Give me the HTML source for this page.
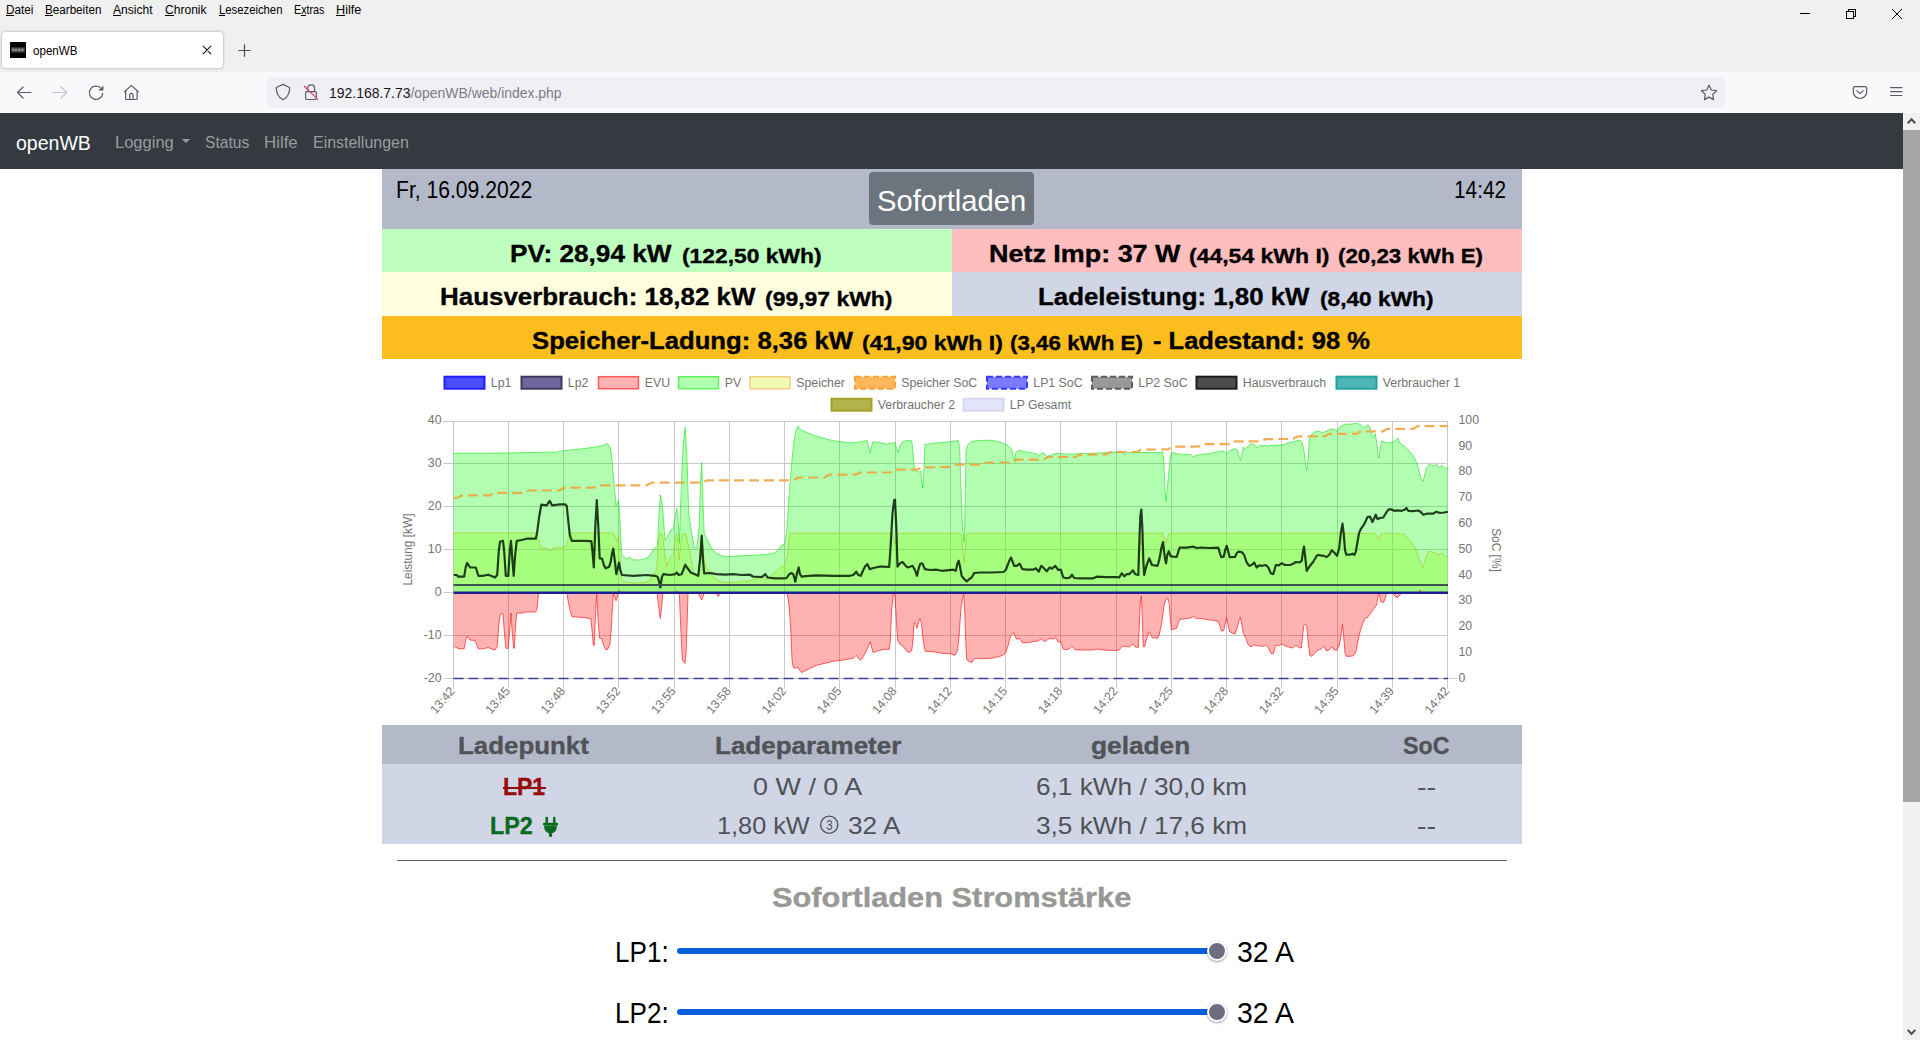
<!DOCTYPE html>
<html lang="de">
<head>
<meta charset="utf-8">
<title>openWB</title>
<style>
*{box-sizing:border-box;margin:0;padding:0}
html,body{width:1920px;height:1040px;overflow:hidden;background:#fff;font-family:"Liberation Sans",sans-serif;color:#000}
.abs{position:absolute}
.t{position:absolute;white-space:nowrap;line-height:1;transform-origin:0 0}
/* ---------- browser chrome ---------- */
#titlebar{position:absolute;left:0;top:0;width:1920px;height:72px;background:#f0f0f0}
#menubar span{position:absolute;top:3px;font-size:12px;line-height:15px;color:#000;white-space:nowrap;transform-origin:0 0}
#menubar u{text-decoration:underline;text-underline-offset:1px}
#tab{position:absolute;left:2px;top:32px;width:221px;height:36px;background:#fff;border-radius:4px;box-shadow:0 0 3px rgba(0,0,0,.35)}
#favicon{position:absolute;left:10px;top:42px;width:16px;height:16px;background:#000;overflow:hidden}
#toolbar{position:absolute;left:0;top:72px;width:1920px;height:41px;background:#f9f9fb}
#urlbar{position:absolute;left:267px;top:77px;width:1458px;height:31px;background:#f0f0f4;border-radius:4px}
svg.ic{position:absolute;overflow:visible}
/* ---------- page ---------- */
#page{position:absolute;left:0;top:113px;width:1903px;height:927px;background:#fff;overflow:hidden}
#navbar{position:absolute;left:0;top:0;width:1903px;height:56px;background:#343a40}
#scroll{position:absolute;left:1903px;top:113px;width:17px;height:927px;background:#f0f0f0}
#thumb{position:absolute;left:0;top:17px;width:17px;height:672px;background:#a6a6a6}
.row{position:absolute}
.b{font-weight:bold}
</style>
</head>
<body>

<!-- ================= browser chrome ================= -->
<div id="titlebar"></div>
<div id="tab"></div>
<div id="favicon"><svg width="16" height="16" viewBox="0 0 16 16"><rect width="16" height="16" fill="#000"/><rect x="1" y="5" width="14" height="6" fill="#2a2a2a"/><rect x="1.500" y="5.800" width="13" height="4.200" fill="#4a4a4a"/><path d="M2 7.900h12" stroke="#9a9a9a" stroke-width="2.200" stroke-dasharray="2.200 0.800" opacity=".8"/></svg></div>
<div id="toolbar"></div>
<div id="urlbar"></div>

<!-- menu mnemonics underlines -->
<div class="abs" style="left:6px;top:15px;width:8px;height:1px;background:#000"></div><div class="abs" style="left:45px;top:15px;width:8px;height:1px;background:#000"></div><div class="abs" style="left:113px;top:15px;width:8px;height:1px;background:#000"></div><div class="abs" style="left:165px;top:15px;width:9px;height:1px;background:#000"></div><div class="abs" style="left:219px;top:15px;width:6px;height:1px;background:#000"></div><div class="abs" style="left:301px;top:15px;width:5px;height:1px;background:#000"></div><div class="abs" style="left:336px;top:15px;width:9px;height:1px;background:#000"></div>

<!-- window controls -->
<svg class="ic" style="left:1790px;top:0" width="130" height="30" viewBox="1790 0 130 30" fill="none" stroke="#000" stroke-width="1">
  <path d="M1800 13.500h10" shape-rendering="crispEdges"/>
  <path d="M1846.500 11.500h7v7h-7z" shape-rendering="crispEdges"/>
  <path d="M1848.500 11.500v-2h7v7h-2" shape-rendering="crispEdges"/>
  <path d="M1892 9l10 10M1902 9l-10 10"/>
</svg>

<!-- tab close / new tab -->
<svg class="ic" style="left:195px;top:40px" width="70" height="24" viewBox="195 40 70 24" fill="none" stroke="#15141a" stroke-width="1.100" stroke-linecap="round">
  <path d="M203.200 46.200l7.600 7.600M210.800 46.200l-7.600 7.600"/>
  <path d="M238.800 50.500h11.500M244.500 44.800v11.500" stroke="#4a4a52" stroke-width="1.200"/>
</svg>

<!-- toolbar icons -->
<svg class="ic" style="left:10px;top:80px" width="140" height="26" viewBox="10 80 140 26" fill="none" stroke="#5b5b66" stroke-width="1.2" stroke-linecap="round" stroke-linejoin="round">
  <!-- back -->
  <path d="M31 92.500H17.500M23.100 87l-5.600 5.500 5.600 5.500"/>
  <!-- forward (disabled) -->
  <g stroke="#c3c3c9"><path d="M53 92.500h13.700M61.100 87l5.600 5.500-5.600 5.500"/></g>
  <!-- reload: open circle + solid arrow head -->
  <path d="M100.300 87.600A6.700 6.700 0 1 0 102.700 93.400"/>
  <path d="M103.400 85.500v5.100h-5.100z" fill="#5b5b66" stroke="none"/>
  <!-- home -->
  <path d="M124.600 91.800l6.800-6.400 6.800 6.400"/>
  <path d="M125.700 91.200v7.600a.7.700 0 0 0 .7.700h10a.7.700 0 0 0 .7-.7v-7.600"/>
  <path d="M129.700 99.300v-4.300a1.700 1.700 0 0 1 3.400 0v4.300"/>
</svg>

<!-- shield + insecure lock -->
<svg class="ic" style="left:270px;top:80px" width="56" height="26" viewBox="270 80 56 26" fill="none" stroke="#5b5b66" stroke-width="1.2" stroke-linecap="round" stroke-linejoin="round">
  <path d="M283 84.400l6.700 3.100c0 5.800-1.700 9.800-6.700 12.200-5-2.400-6.700-6.400-6.700-12.200z"/>
  <!-- lock -->
  <rect x="305.600" y="91.700" width="10.800" height="7.800" rx="1.300"/>
  <path d="M307.800 91.500v-3.300a3.400 3.400 0 0 1 6.800 0v3.300"/>
  <path d="M304.300 86.300l13.400 13.100" stroke="#e5456f" stroke-width="1.300"/>
</svg>

<!-- star / pocket / menu -->
<svg class="ic" style="left:1695px;top:80px" width="215" height="26" viewBox="1695 80 215 26" fill="none" stroke="#5b5b66" stroke-width="1.2" stroke-linecap="round" stroke-linejoin="round">
  <path d="M1709 85.200l2.300 4.800 5.200.700-3.800 3.700.9 5.200-4.600-2.500-4.600 2.500.9-5.200-3.800-3.700 5.200-.7z"/>
  <!-- pocket -->
  <path d="M1854.800 86.600h10.400a1.500 1.500 0 0 1 1.500 1.500v3.700a6.700 6.700 0 0 1-13.400 0v-3.700a1.500 1.500 0 0 1 1.500-1.500z"/>
  <path d="M1856.900 90.600l3.100 3 3.100-3"/>
  <!-- hamburger -->
  <path d="M1890.500 87.600h11.500M1890.500 91.600h11.500M1890.500 95.500h11.500" stroke-width="1.1"/>
</svg>

<!-- ================= scrollbar ================= -->
<div id="scroll"><div id="thumb"></div>
<svg class="ic" style="left:0;top:0" width="17" height="927" viewBox="0 0 17 927" fill="none" stroke="#505050" stroke-width="2.100">
  <path d="M4.700 10.300l3.800-4 3.800 4"/>
  <path d="M4.700 916.900l3.800 4 3.800-4"/>
</svg>
</div>

<!-- ================= page ================= -->
<div id="page"><div id="navbar"></div></div>
<!-- dropdown caret next to Logging -->
<div class="abs" style="left:181.500px;top:138.800px;width:0;height:0;border-left:4.500px solid transparent;border-right:4.500px solid transparent;border-top:4.500px solid #999c9f"></div>

<!-- header row (date / mode button / time) -->
<div class="abs" style="left:382px;top:169px;width:1140px;height:60px;background:#b4b9c9"></div>
<div class="abs" style="left:869px;top:172px;width:165px;height:53px;background:#6c757d;border-radius:4px"></div>

<!-- info rows -->
<div class="abs" style="left:382px;top:229px;width:570px;height:43px;background:#befebe"></div>
<div class="abs" style="left:952px;top:229px;width:570px;height:43px;background:#febebe"></div>
<div class="abs" style="left:382px;top:272px;width:570px;height:44px;background:#fefedf"></div>
<div class="abs" style="left:952px;top:272px;width:570px;height:44px;background:#d0d6e6"></div>
<div class="abs" style="left:382px;top:316px;width:1140px;height:43px;background:#fcbe1e"></div>

<!-- charge point table -->
<div class="abs" style="left:382px;top:725px;width:1140px;height:39px;background:#b4b9c9"></div>
<div class="abs" style="left:382px;top:764px;width:1140px;height:80px;background:#d0d6e6"></div>
<!-- LP1 strike-through -->
<div class="abs" style="left:502.500px;top:786.600px;width:43px;height:2px;background:#9b0a0a"></div>
<!-- plug icon -->
<svg class="ic" style="left:543px;top:816.500px" width="15" height="20.500" viewBox="0 0 15 20" fill="#0b6a1d">
  <rect x="2.500" y="-0.600" width="2.500" height="7" rx="1.100"/>
  <rect x="10" y="-0.600" width="2.500" height="7" rx="1.100"/>
  <rect x="0" y="5.600" width="15" height="2.600" rx="1"/>
  <path d="M1.200 8.200h12.600v1.600a6.300 6.300 0 0 1-4.700 6.100v3.600h-3.200v-3.600a6.300 6.300 0 0 1-4.700-6.100z"/>
</svg>
<!-- phase count circle (3) -->
<svg class="ic" style="left:819px;top:815px" width="21" height="21" viewBox="0 0 21 21">
  <circle cx="10.250" cy="9.750" r="8.600" fill="none" stroke="#4f5256" stroke-width="1.400"/>
  <text transform="translate(10.500,15.200) scale(0.760,1)" x="0" y="0" text-anchor="middle" font-family="Liberation Sans, sans-serif" font-size="15" fill="#4f5256">3</text>
</svg>

<!-- separator -->
<div class="abs" style="left:397px;top:859.500px;width:1110px;height:1px;background:#5f5f5f"></div>

<!-- sliders -->
<div class="abs" style="left:677px;top:948px;width:540px;height:6px;background:#0860dc;border-radius:3px"></div>
<div class="abs" style="left:1207px;top:941px;width:20px;height:20px;border-radius:50%;background:#6d6d80;border:2px solid #fff;box-shadow:0 1px 2.500px rgba(0,0,0,.4)"></div>
<div class="abs" style="left:677px;top:1009px;width:540px;height:6px;background:#0860dc;border-radius:3px"></div>
<div class="abs" style="left:1207px;top:1002px;width:20px;height:20px;border-radius:50%;background:#6d6d80;border:2px solid #fff;box-shadow:0 1px 2.500px rgba(0,0,0,.4)"></div>

<!-- ================= chart ================= -->
<svg class="ic" style="left:382px;top:359px" width="1140" height="366" viewBox="382 359 1140 366">
<rect x="444.5" y="376.7" width="40" height="12" fill="#4d4dff" stroke="#1f1fff" stroke-width="2"/>
<text x="490.8" y="386.5" font-family="Liberation Sans, sans-serif" font-size="12.3" fill="#747474">Lp1</text>
<rect x="521.5" y="376.7" width="40" height="12" fill="#6f669e" stroke="#3c3960" stroke-width="2"/>
<text x="567.8" y="386.5" font-family="Liberation Sans, sans-serif" font-size="12.3" fill="#747474">Lp2</text>
<rect x="598.5" y="376.7" width="40" height="12" fill="#ffb2b2" stroke="#ff5a5a" stroke-width="1.5"/>
<text x="644.8" y="386.5" font-family="Liberation Sans, sans-serif" font-size="12.3" fill="#747474">EVU</text>
<rect x="678.5" y="376.7" width="40" height="12" fill="#b2ffb2" stroke="#5cf25c" stroke-width="1.5"/>
<text x="724.8" y="386.5" font-family="Liberation Sans, sans-serif" font-size="12.3" fill="#747474">PV</text>
<rect x="750.0" y="376.7" width="40" height="12" fill="#f1fbb4" stroke="#f6cc7e" stroke-width="1.5"/>
<text x="796.3" y="386.5" font-family="Liberation Sans, sans-serif" font-size="12.3" fill="#747474">Speicher</text>
<rect x="855.0" y="376.7" width="40" height="12" fill="#ffb75c" stroke="#f9a43a" stroke-width="2" stroke-dasharray="6 3"/>
<text x="901.3" y="386.5" font-family="Liberation Sans, sans-serif" font-size="12.3" fill="#747474">Speicher SoC</text>
<rect x="987.0" y="376.7" width="40" height="12" fill="#7a7aff" stroke="#3b3bff" stroke-width="2" stroke-dasharray="6 3"/>
<text x="1033.3" y="386.5" font-family="Liberation Sans, sans-serif" font-size="12.3" fill="#747474">LP1 SoC</text>
<rect x="1092.0" y="376.7" width="40" height="12" fill="#989898" stroke="#5c5c5c" stroke-width="2" stroke-dasharray="6 3"/>
<text x="1138.3" y="386.5" font-family="Liberation Sans, sans-serif" font-size="12.3" fill="#747474">LP2 SoC</text>
<rect x="1196.5" y="376.7" width="40" height="12" fill="#4d4d4d" stroke="#1c1c1c" stroke-width="2"/>
<text x="1242.8" y="386.5" font-family="Liberation Sans, sans-serif" font-size="12.3" fill="#747474">Hausverbrauch</text>
<rect x="1336.5" y="376.7" width="40" height="12" fill="#4db5b3" stroke="#22a3a0" stroke-width="2"/>
<text x="1382.8" y="386.5" font-family="Liberation Sans, sans-serif" font-size="12.3" fill="#747474">Verbraucher 1</text>
<rect x="831.5" y="398.7" width="40" height="12" fill="#b3b34a" stroke="#a3a328" stroke-width="2"/>
<text x="877.8" y="408.5" font-family="Liberation Sans, sans-serif" font-size="12.3" fill="#747474">Verbraucher 2</text>
<rect x="963.5" y="398.7" width="40" height="12" fill="#e3e3fa" stroke="#d6d6ee" stroke-width="2"/>
<text x="1009.8" y="408.5" font-family="Liberation Sans, sans-serif" font-size="12.3" fill="#747474">LP Gesamt</text>
<path d="M453.5,421.0V688.5M508.5,421.0V688.5M563.5,421.0V688.5M618.5,421.0V688.5M674.5,421.0V688.5M729.5,421.0V688.5M784.5,421.0V688.5M839.5,421.0V688.5M895.5,421.0V688.5M950.5,421.0V688.5M1005.5,421.0V688.5M1060.5,421.0V688.5M1116.5,421.0V688.5M1171.5,421.0V688.5M1226.5,421.0V688.5M1281.5,421.0V688.5M1337.5,421.0V688.5M1392.5,421.0V688.5M1447.5,421.0V688.5M443.5,421.5H1447.5M443.5,463.5H1447.5M443.5,506.5H1447.5M443.5,549.5H1447.5M443.5,592.5H1447.5M443.5,635.5H1447.5M443.5,678.5H1447.5M1448.0,678.5H1457.0" fill="none" stroke="#c9c9c9" stroke-width="1"/>
<rect x="453.5" y="585.0" width="994.5" height="7.5" fill="rgba(0,0,255,0.08)"/>
<path d="M453.7,592.5 L453.7,533.0 L536.7,533.0 L538.3,538.3 L540.8,547.5 L546.7,548.3 L550.0,551.7 L552.5,548.3 L565.0,547.0 L567.5,541.7 L569.2,533.0 L613.3,533.0 L615.0,536.7 L616.7,541.7 L618.7,535.8 L620.0,560.0 L620.8,576.7 L623.3,581.7 L633.3,583.0 L645.0,582.5 L650.0,580.0 L653.3,574.2 L656.7,570.0 L658.3,543.3 L660.0,533.3 L662.5,534.2 L664.2,548.3 L666.7,566.7 L670.8,556.7 L673.3,555.0 L675.0,541.7 L676.7,533.7 L678.0,543.3 L679.2,560.0 L680.8,543.3 L682.5,533.7 L685.8,533.7 L687.5,541.7 L690.8,556.7 L693.3,573.3 L698.3,574.2 L699.5,560.0 L700.7,543.3 L701.7,534.2 L702.5,543.3 L704.2,560.0 L706.7,568.3 L711.7,575.0 L716.7,580.0 L721.7,582.0 L733.3,582.5 L750.0,580.8 L758.3,578.3 L763.3,577.5 L765.3,580.0 L766.7,578.3 L771.7,575.0 L776.7,570.8 L780.0,567.5 L783.3,566.3 L785.8,563.3 L787.5,555.0 L788.7,540.0 L790.0,533.3 L891.7,533.3 L893.3,536.7 L895.3,544.2 L897.0,536.7 L898.3,533.3 L960.8,533.3 L961.7,536.7 L963.0,551.7 L964.3,563.3 L965.3,551.7 L966.3,534.2 L967.5,533.3 L1008.3,533.3 L1010.0,533.3 L1139.2,533.3 L1141.3,545.0 L1143.0,534.2 L1144.3,533.3 L1162.5,533.3 L1164.2,537.5 L1165.8,543.3 L1167.5,537.5 L1169.2,533.3 L1308.3,533.3 L1310.0,533.3 L1375.0,533.3 L1376.7,535.8 L1378.7,539.2 L1380.3,534.7 L1382.5,533.3 L1398.3,533.3 L1400.8,534.2 L1403.3,533.7 L1405.8,537.5 L1408.3,538.3 L1410.8,541.7 L1413.3,545.0 L1415.8,549.2 L1418.3,556.7 L1420.8,563.3 L1423.0,567.5 L1424.7,561.7 L1426.7,555.0 L1429.2,551.3 L1431.7,551.7 L1436.7,553.7 L1439.2,555.0 L1441.7,552.5 L1444.7,555.8 L1447.8,557.0 L1447.8,592.5 Z" fill="rgba(200,255,13,0.3)" stroke="none"/>
<polyline points="453.7,533.0 536.7,533.0 538.3,538.3 540.8,547.5 546.7,548.3 550.0,551.7 552.5,548.3 565.0,547.0 567.5,541.7 569.2,533.0 613.3,533.0 615.0,536.7 616.7,541.7 618.7,535.8 620.0,560.0 620.8,576.7 623.3,581.7 633.3,583.0 645.0,582.5 650.0,580.0 653.3,574.2 656.7,570.0 658.3,543.3 660.0,533.3 662.5,534.2 664.2,548.3 666.7,566.7 670.8,556.7 673.3,555.0 675.0,541.7 676.7,533.7 678.0,543.3 679.2,560.0 680.8,543.3 682.5,533.7 685.8,533.7 687.5,541.7 690.8,556.7 693.3,573.3 698.3,574.2 699.5,560.0 700.7,543.3 701.7,534.2 702.5,543.3 704.2,560.0 706.7,568.3 711.7,575.0 716.7,580.0 721.7,582.0 733.3,582.5 750.0,580.8 758.3,578.3 763.3,577.5 765.3,580.0 766.7,578.3 771.7,575.0 776.7,570.8 780.0,567.5 783.3,566.3 785.8,563.3 787.5,555.0 788.7,540.0 790.0,533.3 891.7,533.3 893.3,536.7 895.3,544.2 897.0,536.7 898.3,533.3 960.8,533.3 961.7,536.7 963.0,551.7 964.3,563.3 965.3,551.7 966.3,534.2 967.5,533.3 1008.3,533.3 1010.0,533.3 1139.2,533.3 1141.3,545.0 1143.0,534.2 1144.3,533.3 1162.5,533.3 1164.2,537.5 1165.8,543.3 1167.5,537.5 1169.2,533.3 1308.3,533.3 1310.0,533.3 1375.0,533.3 1376.7,535.8 1378.7,539.2 1380.3,534.7 1382.5,533.3 1398.3,533.3 1400.8,534.2 1403.3,533.7 1405.8,537.5 1408.3,538.3 1410.8,541.7 1413.3,545.0 1415.8,549.2 1418.3,556.7 1420.8,563.3 1423.0,567.5 1424.7,561.7 1426.7,555.0 1429.2,551.3 1431.7,551.7 1436.7,553.7 1439.2,555.0 1441.7,552.5 1444.7,555.8 1447.8,557.0" fill="none" stroke="rgba(255,155,13,0.55)" stroke-width="1" stroke-linejoin="round"/>
<path d="M453.7,592.5 L453.7,453.3 L508.7,453.0 L556.7,452.0 L563.3,450.7 L583.3,448.7 L600.0,446.3 L607.7,443.7 L610.3,447.5 L612.0,460.0 L613.7,480.0 L616.0,505.8 L618.7,500.0 L620.3,526.7 L621.7,555.0 L625.0,557.5 L627.7,559.2 L629.7,557.0 L632.5,559.7 L640.0,560.0 L646.7,558.0 L650.0,555.0 L653.3,549.2 L657.5,545.8 L659.2,510.0 L660.5,495.0 L662.5,506.7 L665.0,540.0 L666.7,538.3 L670.8,530.0 L673.3,528.7 L675.3,516.7 L676.7,508.3 L678.0,518.3 L679.3,543.3 L681.7,476.7 L683.3,443.3 L685.2,427.2 L687.0,460.0 L688.7,513.3 L691.7,533.3 L694.2,547.5 L696.7,547.5 L699.2,526.7 L700.3,490.0 L700.7,476.7 L701.7,462.5 L703.0,503.3 L704.2,533.3 L706.7,538.3 L710.0,545.0 L712.5,549.7 L716.7,553.3 L721.7,555.8 L726.7,556.7 L741.7,555.8 L758.3,555.0 L770.0,554.2 L775.0,552.5 L778.3,550.0 L780.8,545.8 L783.3,545.0 L785.3,541.7 L787.0,526.7 L789.2,493.3 L791.7,463.3 L793.7,443.3 L795.8,430.8 L798.3,426.2 L800.8,429.7 L806.7,432.5 L816.7,436.3 L830.0,440.0 L839.7,441.7 L850.0,442.8 L860.0,442.0 L867.2,440.5 L868.7,445.8 L870.3,453.0 L871.7,445.8 L873.0,441.7 L880.0,442.8 L886.7,444.2 L895.0,442.5 L896.3,447.5 L898.0,452.5 L899.7,445.8 L902.5,441.7 L906.7,440.5 L911.7,440.8 L913.0,451.7 L914.2,466.7 L916.7,471.3 L919.2,472.0 L920.8,471.3 L921.7,480.0 L922.8,488.0 L923.8,473.3 L925.0,444.2 L927.5,444.2 L933.3,443.3 L941.7,442.5 L950.0,441.7 L958.3,440.5 L959.7,448.3 L960.8,485.0 L962.5,526.7 L964.2,542.5 L965.0,510.0 L966.0,451.7 L967.5,445.0 L970.0,442.5 L975.0,440.8 L983.3,440.3 L991.7,440.3 L1000.0,442.0 L1006.7,444.7 L1010.0,447.5 L1012.0,450.0 L1013.3,456.7 L1014.7,460.0 L1015.8,453.0 L1017.5,450.8 L1020.0,450.5 L1025.0,451.7 L1033.3,453.0 L1036.7,453.7 L1038.7,456.3 L1040.8,453.7 L1043.0,452.5 L1045.0,454.2 L1047.0,456.7 L1050.0,455.3 L1056.7,453.3 L1066.7,454.2 L1083.3,453.7 L1100.0,453.0 L1116.7,452.0 L1122.5,452.5 L1125.0,455.0 L1127.5,452.5 L1141.7,452.5 L1158.3,452.5 L1162.5,452.0 L1163.7,460.0 L1165.0,490.0 L1166.0,501.3 L1167.2,490.0 L1168.7,473.3 L1170.0,460.0 L1171.3,452.5 L1176.7,453.7 L1183.3,454.7 L1190.0,454.2 L1193.3,457.0 L1196.7,455.0 L1208.3,453.7 L1216.7,452.0 L1223.3,450.8 L1226.3,453.7 L1230.8,450.0 L1235.0,448.7 L1237.5,450.0 L1239.2,457.5 L1240.3,460.3 L1241.7,455.0 L1243.3,447.0 L1245.3,449.2 L1248.3,445.8 L1251.7,443.8 L1254.2,444.2 L1257.0,448.0 L1260.0,445.3 L1266.7,445.8 L1275.0,445.3 L1283.3,444.7 L1291.7,442.0 L1300.0,440.0 L1302.0,441.7 L1304.2,451.7 L1305.8,466.7 L1307.0,470.0 L1308.0,460.0 L1309.2,440.0 L1311.7,434.2 L1315.0,432.0 L1318.3,430.8 L1322.5,433.0 L1326.7,430.8 L1331.7,428.8 L1335.0,429.7 L1337.0,431.3 L1340.0,426.7 L1345.0,424.2 L1350.0,424.2 L1356.7,423.3 L1360.8,424.7 L1364.2,428.0 L1366.7,425.3 L1368.3,425.0 L1370.0,427.5 L1372.5,436.7 L1373.7,437.5 L1375.3,433.7 L1376.7,443.3 L1378.0,455.0 L1378.8,458.3 L1380.0,450.0 L1381.7,440.8 L1385.0,442.5 L1388.3,443.0 L1393.3,441.7 L1396.7,439.2 L1398.0,438.3 L1400.0,443.3 L1403.3,445.3 L1408.3,450.0 L1413.3,455.8 L1416.7,462.5 L1419.2,471.7 L1421.3,479.2 L1423.0,481.7 L1424.7,475.0 L1426.7,467.5 L1429.2,464.2 L1431.7,465.3 L1434.2,465.8 L1436.7,464.2 L1439.2,468.0 L1441.7,465.3 L1444.7,468.0 L1447.8,468.3 L1447.8,592.5 Z" fill="rgba(0,255,0,0.3)" stroke="none"/>
<polyline points="453.7,453.3 508.7,453.0 556.7,452.0 563.3,450.7 583.3,448.7 600.0,446.3 607.7,443.7 610.3,447.5 612.0,460.0 613.7,480.0 616.0,505.8 618.7,500.0 620.3,526.7 621.7,555.0 625.0,557.5 627.7,559.2 629.7,557.0 632.5,559.7 640.0,560.0 646.7,558.0 650.0,555.0 653.3,549.2 657.5,545.8 659.2,510.0 660.5,495.0 662.5,506.7 665.0,540.0 666.7,538.3 670.8,530.0 673.3,528.7 675.3,516.7 676.7,508.3 678.0,518.3 679.3,543.3 681.7,476.7 683.3,443.3 685.2,427.2 687.0,460.0 688.7,513.3 691.7,533.3 694.2,547.5 696.7,547.5 699.2,526.7 700.3,490.0 700.7,476.7 701.7,462.5 703.0,503.3 704.2,533.3 706.7,538.3 710.0,545.0 712.5,549.7 716.7,553.3 721.7,555.8 726.7,556.7 741.7,555.8 758.3,555.0 770.0,554.2 775.0,552.5 778.3,550.0 780.8,545.8 783.3,545.0 785.3,541.7 787.0,526.7 789.2,493.3 791.7,463.3 793.7,443.3 795.8,430.8 798.3,426.2 800.8,429.7 806.7,432.5 816.7,436.3 830.0,440.0 839.7,441.7 850.0,442.8 860.0,442.0 867.2,440.5 868.7,445.8 870.3,453.0 871.7,445.8 873.0,441.7 880.0,442.8 886.7,444.2 895.0,442.5 896.3,447.5 898.0,452.5 899.7,445.8 902.5,441.7 906.7,440.5 911.7,440.8 913.0,451.7 914.2,466.7 916.7,471.3 919.2,472.0 920.8,471.3 921.7,480.0 922.8,488.0 923.8,473.3 925.0,444.2 927.5,444.2 933.3,443.3 941.7,442.5 950.0,441.7 958.3,440.5 959.7,448.3 960.8,485.0 962.5,526.7 964.2,542.5 965.0,510.0 966.0,451.7 967.5,445.0 970.0,442.5 975.0,440.8 983.3,440.3 991.7,440.3 1000.0,442.0 1006.7,444.7 1010.0,447.5 1012.0,450.0 1013.3,456.7 1014.7,460.0 1015.8,453.0 1017.5,450.8 1020.0,450.5 1025.0,451.7 1033.3,453.0 1036.7,453.7 1038.7,456.3 1040.8,453.7 1043.0,452.5 1045.0,454.2 1047.0,456.7 1050.0,455.3 1056.7,453.3 1066.7,454.2 1083.3,453.7 1100.0,453.0 1116.7,452.0 1122.5,452.5 1125.0,455.0 1127.5,452.5 1141.7,452.5 1158.3,452.5 1162.5,452.0 1163.7,460.0 1165.0,490.0 1166.0,501.3 1167.2,490.0 1168.7,473.3 1170.0,460.0 1171.3,452.5 1176.7,453.7 1183.3,454.7 1190.0,454.2 1193.3,457.0 1196.7,455.0 1208.3,453.7 1216.7,452.0 1223.3,450.8 1226.3,453.7 1230.8,450.0 1235.0,448.7 1237.5,450.0 1239.2,457.5 1240.3,460.3 1241.7,455.0 1243.3,447.0 1245.3,449.2 1248.3,445.8 1251.7,443.8 1254.2,444.2 1257.0,448.0 1260.0,445.3 1266.7,445.8 1275.0,445.3 1283.3,444.7 1291.7,442.0 1300.0,440.0 1302.0,441.7 1304.2,451.7 1305.8,466.7 1307.0,470.0 1308.0,460.0 1309.2,440.0 1311.7,434.2 1315.0,432.0 1318.3,430.8 1322.5,433.0 1326.7,430.8 1331.7,428.8 1335.0,429.7 1337.0,431.3 1340.0,426.7 1345.0,424.2 1350.0,424.2 1356.7,423.3 1360.8,424.7 1364.2,428.0 1366.7,425.3 1368.3,425.0 1370.0,427.5 1372.5,436.7 1373.7,437.5 1375.3,433.7 1376.7,443.3 1378.0,455.0 1378.8,458.3 1380.0,450.0 1381.7,440.8 1385.0,442.5 1388.3,443.0 1393.3,441.7 1396.7,439.2 1398.0,438.3 1400.0,443.3 1403.3,445.3 1408.3,450.0 1413.3,455.8 1416.7,462.5 1419.2,471.7 1421.3,479.2 1423.0,481.7 1424.7,475.0 1426.7,467.5 1429.2,464.2 1431.7,465.3 1434.2,465.8 1436.7,464.2 1439.2,468.0 1441.7,465.3 1444.7,468.0 1447.8,468.3" fill="none" stroke="rgba(0,225,0,0.55)" stroke-width="1" stroke-linejoin="round"/>
<path d="M453.7,592.5 L453.7,647.0 L455.8,647.0 L458.3,648.7 L464.2,648.7 L465.8,640.0 L467.2,636.3 L470.0,640.0 L475.0,640.5 L476.7,645.0 L478.3,648.8 L483.3,648.8 L488.3,647.5 L493.3,649.7 L495.0,650.0 L497.2,646.7 L498.7,626.7 L500.0,615.0 L501.3,613.7 L503.0,614.2 L504.2,630.0 L505.8,648.3 L508.3,648.3 L509.7,630.0 L511.0,613.0 L512.0,630.0 L513.7,648.3 L514.3,648.3 L515.3,630.0 L516.7,613.3 L521.7,613.0 L526.7,612.0 L535.8,612.0 L537.0,608.3 L538.7,592.5 L566.7,592.5 L568.3,601.7 L570.0,610.0 L572.0,616.7 L583.3,617.5 L590.8,618.7 L592.0,630.0 L593.3,645.3 L594.3,645.3 L595.3,618.3 L596.7,594.2 L598.0,618.3 L599.3,638.0 L601.7,638.7 L603.7,645.8 L605.8,649.7 L607.5,649.7 L609.7,645.0 L611.0,633.3 L612.0,615.0 L613.3,594.2 L615.0,597.5 L616.0,600.8 L617.0,598.3 L618.3,592.5 L619.2,590.8 L620.0,592.5 L657.0,592.5 L658.7,606.7 L660.3,618.3 L661.7,606.7 L663.0,592.5 L675.8,592.5 L676.7,591.0 L677.7,592.5 L679.3,592.5 L680.7,626.7 L682.3,660.0 L685.0,663.3 L686.0,653.3 L687.0,626.7 L688.0,592.5 L698.3,592.5 L699.3,595.3 L700.7,598.3 L701.7,600.0 L703.3,595.8 L704.7,592.5 L715.8,592.5 L718.3,596.7 L720.3,592.5 L787.0,592.5 L789.2,606.7 L790.8,630.0 L792.0,660.0 L793.3,667.5 L795.8,668.3 L797.5,667.0 L800.0,670.8 L801.7,672.5 L808.3,669.2 L816.7,665.3 L825.0,663.3 L833.3,661.2 L843.3,660.0 L853.3,658.3 L856.3,655.3 L858.3,658.3 L860.8,660.3 L863.3,656.7 L866.7,650.0 L870.3,642.0 L873.0,652.5 L878.3,650.8 L885.0,649.2 L889.2,649.5 L890.3,640.0 L891.7,610.0 L893.3,594.2 L894.7,594.2 L895.8,610.0 L897.5,640.0 L900.0,644.2 L903.3,646.7 L906.7,651.3 L909.2,652.5 L911.7,650.8 L913.0,640.0 L914.2,622.5 L915.8,624.2 L917.0,628.3 L918.7,621.7 L920.0,618.7 L921.3,622.5 L922.5,635.0 L924.2,646.7 L925.3,651.3 L933.3,651.7 L941.7,653.3 L950.0,653.7 L955.0,655.3 L957.5,650.8 L959.2,635.0 L960.8,610.0 L962.5,598.3 L963.7,594.2 L964.7,610.0 L965.8,643.3 L966.7,659.2 L968.3,661.3 L972.0,662.5 L974.2,658.7 L983.3,658.7 L991.7,658.3 L1000.0,656.3 L1003.3,655.0 L1005.8,652.5 L1008.3,645.0 L1010.0,638.3 L1010.8,635.8 L1013.7,632.5 L1016.3,639.2 L1019.2,638.3 L1022.5,643.0 L1028.3,642.5 L1033.3,641.7 L1038.3,640.8 L1041.3,638.7 L1044.2,641.7 L1047.5,639.7 L1050.0,638.3 L1053.0,639.2 L1055.3,637.5 L1058.3,642.0 L1060.8,641.7 L1063.3,649.2 L1066.7,649.7 L1070.0,648.3 L1072.0,646.3 L1074.7,649.7 L1080.0,650.0 L1093.3,650.0 L1096.7,649.2 L1106.7,650.3 L1116.7,650.5 L1119.2,650.0 L1121.7,646.7 L1124.2,646.3 L1129.2,647.0 L1130.8,645.8 L1132.8,643.7 L1135.3,647.0 L1138.3,647.5 L1139.3,626.7 L1140.3,601.7 L1141.3,595.8 L1142.3,618.3 L1143.3,646.7 L1144.7,646.7 L1146.7,638.3 L1149.2,631.7 L1152.0,637.5 L1157.5,638.3 L1159.2,635.0 L1161.7,623.3 L1164.2,605.0 L1165.8,599.2 L1168.0,598.7 L1169.2,603.3 L1170.3,618.3 L1171.3,629.7 L1176.7,628.3 L1178.3,623.3 L1180.0,619.2 L1186.7,618.7 L1190.8,618.0 L1193.3,616.3 L1196.7,618.7 L1201.7,618.7 L1208.3,619.7 L1218.3,621.3 L1220.0,626.7 L1221.3,630.8 L1223.7,630.8 L1225.0,624.2 L1226.7,617.5 L1228.3,626.7 L1230.0,632.0 L1235.0,634.2 L1237.5,626.7 L1239.2,620.0 L1240.3,617.5 L1241.7,624.2 L1243.3,633.3 L1245.8,638.3 L1248.3,645.0 L1250.8,647.0 L1253.3,645.0 L1258.3,645.8 L1262.5,646.3 L1265.8,645.3 L1268.3,647.5 L1270.8,653.3 L1273.3,653.7 L1275.8,645.0 L1278.7,645.8 L1281.7,644.2 L1285.0,645.8 L1290.0,647.5 L1292.5,648.0 L1295.8,645.3 L1299.2,647.5 L1301.3,648.0 L1302.5,638.3 L1303.7,625.8 L1305.0,624.2 L1306.7,625.8 L1308.0,640.0 L1309.7,655.3 L1311.7,656.3 L1315.0,652.5 L1318.3,650.0 L1320.8,649.2 L1323.7,646.3 L1326.3,650.8 L1329.2,650.0 L1331.7,646.7 L1334.2,650.0 L1336.7,650.3 L1339.2,645.8 L1340.8,636.7 L1342.5,624.7 L1343.7,636.7 L1345.0,653.3 L1346.3,656.3 L1350.0,656.3 L1353.3,655.8 L1355.8,652.5 L1357.5,643.3 L1360.0,631.7 L1362.5,624.2 L1365.0,618.3 L1367.5,617.5 L1371.7,611.7 L1376.7,605.0 L1378.0,595.8 L1379.2,594.2 L1380.8,601.7 L1383.3,602.5 L1385.0,599.2 L1386.7,592.5 L1392.5,592.5 L1395.0,596.3 L1397.5,597.5 L1400.0,595.0 L1400.8,592.5 L1418.7,592.5 L1420.0,590.3 L1421.3,592.5 L1447.8,592.5 L1447.8,592.5 Z" fill="rgba(255,0,0,0.3)" stroke="none"/>
<polyline points="453.7,647.0 455.8,647.0 458.3,648.7 464.2,648.7 465.8,640.0 467.2,636.3 470.0,640.0 475.0,640.5 476.7,645.0 478.3,648.8 483.3,648.8 488.3,647.5 493.3,649.7 495.0,650.0 497.2,646.7 498.7,626.7 500.0,615.0 501.3,613.7 503.0,614.2 504.2,630.0 505.8,648.3 508.3,648.3 509.7,630.0 511.0,613.0 512.0,630.0 513.7,648.3 514.3,648.3 515.3,630.0 516.7,613.3 521.7,613.0 526.7,612.0 535.8,612.0 537.0,608.3 538.7,592.5 566.7,592.5 568.3,601.7 570.0,610.0 572.0,616.7 583.3,617.5 590.8,618.7 592.0,630.0 593.3,645.3 594.3,645.3 595.3,618.3 596.7,594.2 598.0,618.3 599.3,638.0 601.7,638.7 603.7,645.8 605.8,649.7 607.5,649.7 609.7,645.0 611.0,633.3 612.0,615.0 613.3,594.2 615.0,597.5 616.0,600.8 617.0,598.3 618.3,592.5 619.2,590.8 620.0,592.5 657.0,592.5 658.7,606.7 660.3,618.3 661.7,606.7 663.0,592.5 675.8,592.5 676.7,591.0 677.7,592.5 679.3,592.5 680.7,626.7 682.3,660.0 685.0,663.3 686.0,653.3 687.0,626.7 688.0,592.5 698.3,592.5 699.3,595.3 700.7,598.3 701.7,600.0 703.3,595.8 704.7,592.5 715.8,592.5 718.3,596.7 720.3,592.5 787.0,592.5 789.2,606.7 790.8,630.0 792.0,660.0 793.3,667.5 795.8,668.3 797.5,667.0 800.0,670.8 801.7,672.5 808.3,669.2 816.7,665.3 825.0,663.3 833.3,661.2 843.3,660.0 853.3,658.3 856.3,655.3 858.3,658.3 860.8,660.3 863.3,656.7 866.7,650.0 870.3,642.0 873.0,652.5 878.3,650.8 885.0,649.2 889.2,649.5 890.3,640.0 891.7,610.0 893.3,594.2 894.7,594.2 895.8,610.0 897.5,640.0 900.0,644.2 903.3,646.7 906.7,651.3 909.2,652.5 911.7,650.8 913.0,640.0 914.2,622.5 915.8,624.2 917.0,628.3 918.7,621.7 920.0,618.7 921.3,622.5 922.5,635.0 924.2,646.7 925.3,651.3 933.3,651.7 941.7,653.3 950.0,653.7 955.0,655.3 957.5,650.8 959.2,635.0 960.8,610.0 962.5,598.3 963.7,594.2 964.7,610.0 965.8,643.3 966.7,659.2 968.3,661.3 972.0,662.5 974.2,658.7 983.3,658.7 991.7,658.3 1000.0,656.3 1003.3,655.0 1005.8,652.5 1008.3,645.0 1010.0,638.3 1010.8,635.8 1013.7,632.5 1016.3,639.2 1019.2,638.3 1022.5,643.0 1028.3,642.5 1033.3,641.7 1038.3,640.8 1041.3,638.7 1044.2,641.7 1047.5,639.7 1050.0,638.3 1053.0,639.2 1055.3,637.5 1058.3,642.0 1060.8,641.7 1063.3,649.2 1066.7,649.7 1070.0,648.3 1072.0,646.3 1074.7,649.7 1080.0,650.0 1093.3,650.0 1096.7,649.2 1106.7,650.3 1116.7,650.5 1119.2,650.0 1121.7,646.7 1124.2,646.3 1129.2,647.0 1130.8,645.8 1132.8,643.7 1135.3,647.0 1138.3,647.5 1139.3,626.7 1140.3,601.7 1141.3,595.8 1142.3,618.3 1143.3,646.7 1144.7,646.7 1146.7,638.3 1149.2,631.7 1152.0,637.5 1157.5,638.3 1159.2,635.0 1161.7,623.3 1164.2,605.0 1165.8,599.2 1168.0,598.7 1169.2,603.3 1170.3,618.3 1171.3,629.7 1176.7,628.3 1178.3,623.3 1180.0,619.2 1186.7,618.7 1190.8,618.0 1193.3,616.3 1196.7,618.7 1201.7,618.7 1208.3,619.7 1218.3,621.3 1220.0,626.7 1221.3,630.8 1223.7,630.8 1225.0,624.2 1226.7,617.5 1228.3,626.7 1230.0,632.0 1235.0,634.2 1237.5,626.7 1239.2,620.0 1240.3,617.5 1241.7,624.2 1243.3,633.3 1245.8,638.3 1248.3,645.0 1250.8,647.0 1253.3,645.0 1258.3,645.8 1262.5,646.3 1265.8,645.3 1268.3,647.5 1270.8,653.3 1273.3,653.7 1275.8,645.0 1278.7,645.8 1281.7,644.2 1285.0,645.8 1290.0,647.5 1292.5,648.0 1295.8,645.3 1299.2,647.5 1301.3,648.0 1302.5,638.3 1303.7,625.8 1305.0,624.2 1306.7,625.8 1308.0,640.0 1309.7,655.3 1311.7,656.3 1315.0,652.5 1318.3,650.0 1320.8,649.2 1323.7,646.3 1326.3,650.8 1329.2,650.0 1331.7,646.7 1334.2,650.0 1336.7,650.3 1339.2,645.8 1340.8,636.7 1342.5,624.7 1343.7,636.7 1345.0,653.3 1346.3,656.3 1350.0,656.3 1353.3,655.8 1355.8,652.5 1357.5,643.3 1360.0,631.7 1362.5,624.2 1365.0,618.3 1367.5,617.5 1371.7,611.7 1376.7,605.0 1378.0,595.8 1379.2,594.2 1380.8,601.7 1383.3,602.5 1385.0,599.2 1386.7,592.5 1392.5,592.5 1395.0,596.3 1397.5,597.5 1400.0,595.0 1400.8,592.5 1418.7,592.5 1420.0,590.3 1421.3,592.5 1447.8,592.5" fill="none" stroke="rgba(255,0,0,0.6)" stroke-width="1" stroke-linejoin="round"/>
<path d="M453.5,678.5H1448.0" fill="none" stroke="#3e3e9e" stroke-width="1.3" stroke-dasharray="10 5"/>
<polyline points="453.7,498.0 458.3,497.5 461.7,495.3 490.0,495.3 493.3,493.0 523.3,492.8 528.3,490.5 560.0,490.5 563.3,487.7 593.3,487.7 600.0,485.3 646.7,485.3 651.7,482.7 700.0,482.7 703.3,482.7 706.7,480.3 793.3,480.3 798.3,477.5 825.0,477.5 829.2,474.7 855.8,474.7 860.0,472.5 890.0,472.5 893.3,469.7 916.7,469.7 921.7,467.5 950.0,467.0 954.2,464.7 981.7,464.7 986.7,462.5 1008.3,462.5 1010.0,462.5 1011.7,462.5 1016.7,459.7 1043.3,459.7 1048.3,457.0 1075.0,457.0 1080.0,454.7 1106.7,454.3 1110.8,452.0 1136.7,452.0 1140.8,449.7 1168.3,449.3 1171.7,446.7 1198.3,446.7 1202.5,444.2 1230.8,444.2 1235.0,441.3 1261.7,441.3 1265.0,439.2 1293.3,438.8 1298.3,436.3 1308.3,436.3 1310.0,436.3 1325.0,436.3 1329.2,433.8 1356.7,433.8 1360.0,431.3 1383.3,431.3 1387.5,428.8 1413.3,428.8 1417.5,426.2 1447.8,426.2" fill="none" stroke="rgba(240,160,55,0.85)" stroke-width="2.2" stroke-dasharray="10 5" stroke-linejoin="round"/>
<polyline points="453.7,575.0 456.7,575.0 458.3,576.7 464.2,576.7 465.8,566.7 467.2,563.0 470.0,567.5 475.8,567.5 478.3,575.8 483.3,575.8 488.3,574.7 493.3,576.7 495.0,577.5 497.2,575.0 498.7,551.7 500.0,541.7 503.0,540.8 504.2,551.7 505.8,575.8 508.3,575.8 509.7,551.7 511.0,540.8 512.0,555.0 513.7,575.8 515.0,556.7 516.7,540.8 521.7,540.0 526.7,538.7 535.8,538.7 537.0,533.3 539.2,516.7 541.3,504.7 546.7,505.3 548.0,503.3 549.7,500.8 552.0,505.3 560.0,504.3 565.0,504.3 566.7,505.8 568.0,518.3 569.7,534.2 571.7,540.8 583.3,540.8 591.3,541.2 592.5,551.7 593.8,567.5 595.3,526.7 596.8,500.0 598.3,526.7 599.7,558.3 602.0,558.7 604.2,565.8 605.8,568.3 609.2,566.7 610.8,561.7 612.0,553.3 613.3,548.7 614.7,560.0 616.3,574.2 617.7,568.3 619.0,562.5 620.3,570.0 622.0,575.0 633.3,575.8 646.7,575.0 655.0,575.8 657.5,576.7 659.2,581.7 660.3,587.5 662.0,576.7 663.3,574.2 670.0,575.0 675.0,574.2 676.7,572.5 678.7,575.0 681.7,574.2 683.3,570.0 685.3,564.7 687.5,568.3 690.8,572.5 698.3,575.8 700.0,560.0 700.7,551.7 701.7,535.8 703.0,560.0 704.2,573.3 710.0,573.0 716.7,574.2 725.0,574.7 733.3,574.2 741.7,575.0 750.0,574.7 753.3,576.7 761.7,577.0 763.3,575.8 765.3,574.2 767.5,577.5 775.0,578.3 783.3,578.3 786.7,578.0 789.2,574.2 791.3,573.0 793.3,574.2 795.3,581.7 797.0,573.3 798.7,567.5 800.0,574.2 801.7,576.7 808.3,575.8 816.7,575.3 833.3,575.8 850.0,575.8 853.3,575.0 856.2,571.7 858.3,575.0 860.8,575.8 863.3,570.0 865.5,565.8 867.5,564.2 869.7,569.2 873.3,568.0 879.2,566.7 883.3,566.7 889.2,567.0 890.8,543.3 892.5,513.3 894.2,500.0 895.0,499.7 896.3,526.7 897.5,566.7 900.0,563.3 902.5,562.0 905.0,565.0 907.5,567.5 910.0,566.7 912.5,565.8 915.0,570.0 917.0,575.8 918.7,568.3 920.3,563.7 922.5,563.7 925.0,569.2 930.0,570.0 936.7,569.7 941.7,570.8 946.7,570.3 953.3,569.7 955.8,570.8 957.5,563.3 958.7,560.8 960.0,566.7 961.7,575.8 964.2,579.2 966.7,581.3 969.2,579.2 971.7,577.5 974.2,573.0 980.0,572.5 991.7,572.5 1003.3,572.0 1005.8,570.0 1008.3,563.3 1010.0,559.2 1011.0,557.5 1014.2,565.8 1016.7,565.8 1019.7,563.7 1022.5,569.2 1026.7,569.7 1033.3,569.7 1035.8,568.3 1038.7,571.7 1041.3,565.8 1043.7,568.0 1046.7,571.3 1049.7,567.5 1052.0,568.7 1055.3,565.8 1058.3,570.0 1060.8,569.7 1063.3,577.5 1066.7,578.3 1070.0,577.5 1072.0,574.7 1074.2,578.0 1080.0,578.3 1093.3,578.3 1096.7,576.7 1106.7,577.2 1116.7,577.0 1119.2,577.5 1121.7,573.3 1124.2,576.3 1126.7,574.2 1129.2,574.2 1130.8,572.5 1133.0,570.3 1135.3,574.2 1138.3,575.0 1139.3,543.3 1140.3,516.7 1141.3,509.7 1142.3,526.7 1143.3,560.0 1144.2,575.0 1146.7,565.0 1149.2,558.3 1152.0,565.0 1157.5,565.8 1159.2,560.0 1161.7,546.7 1163.0,542.0 1164.7,556.7 1166.0,563.3 1167.3,555.0 1168.7,551.3 1170.8,556.3 1176.7,557.0 1178.3,551.7 1179.7,547.5 1186.7,547.7 1193.3,546.7 1196.7,548.0 1201.7,547.5 1208.3,548.0 1218.3,547.7 1220.0,553.3 1221.3,557.2 1223.7,556.7 1225.0,550.8 1226.7,545.8 1228.3,551.7 1229.7,557.2 1235.0,557.0 1236.7,553.3 1238.3,551.7 1241.7,552.0 1244.2,555.0 1246.7,562.5 1249.2,565.8 1251.7,565.0 1254.2,562.5 1256.7,567.5 1259.2,565.3 1262.5,565.8 1265.8,565.0 1268.3,567.5 1270.8,573.3 1273.3,574.2 1275.8,565.0 1278.7,565.3 1281.7,563.3 1285.0,565.0 1290.0,565.0 1293.3,563.7 1295.8,562.0 1299.2,562.5 1301.7,560.8 1303.0,551.7 1304.0,546.7 1305.0,555.0 1306.7,570.8 1308.3,568.3 1310.0,565.8 1313.3,561.7 1316.7,555.8 1318.3,555.0 1323.3,555.8 1326.7,557.0 1329.2,555.0 1331.7,550.3 1334.2,552.5 1337.0,555.8 1339.2,548.3 1340.8,533.3 1342.5,523.7 1343.7,533.3 1345.0,550.0 1346.3,554.7 1350.0,554.7 1352.5,553.7 1354.2,555.0 1355.8,551.7 1357.5,541.7 1359.2,532.5 1360.8,529.2 1364.2,524.2 1367.5,517.0 1370.0,516.7 1372.5,522.0 1374.2,518.3 1375.8,514.7 1377.5,519.2 1380.0,518.0 1383.3,517.5 1385.8,513.3 1388.3,509.7 1390.8,509.2 1394.2,510.8 1397.5,510.3 1401.7,510.8 1404.7,509.7 1406.3,508.0 1408.3,510.8 1413.3,511.2 1418.3,510.5 1420.8,512.0 1423.3,514.7 1426.7,513.7 1433.3,513.7 1436.3,511.7 1440.0,513.0 1444.2,512.5 1447.8,511.7" fill="none" stroke="rgba(0,20,0,0.82)" stroke-width="2.2" stroke-linejoin="round"/>
<path d="M453.5,585.0H1448.0" fill="none" stroke="#3a5449" stroke-width="2"/>
<path d="M453.5,592.8H1448.0" fill="none" stroke="#1c1c96" stroke-width="2.4"/>
<text x="441.5" y="423.8" text-anchor="end" font-family="Liberation Sans, sans-serif" font-size="12.3" fill="#747474">40</text>
<text x="441.5" y="466.8" text-anchor="end" font-family="Liberation Sans, sans-serif" font-size="12.3" fill="#747474">30</text>
<text x="441.5" y="509.8" text-anchor="end" font-family="Liberation Sans, sans-serif" font-size="12.3" fill="#747474">20</text>
<text x="441.5" y="552.8" text-anchor="end" font-family="Liberation Sans, sans-serif" font-size="12.3" fill="#747474">10</text>
<text x="441.5" y="595.8" text-anchor="end" font-family="Liberation Sans, sans-serif" font-size="12.3" fill="#747474">0</text>
<text x="441.5" y="638.8" text-anchor="end" font-family="Liberation Sans, sans-serif" font-size="12.3" fill="#747474">-10</text>
<text x="441.5" y="681.8" text-anchor="end" font-family="Liberation Sans, sans-serif" font-size="12.3" fill="#747474">-20</text>
<text x="1458.5" y="681.8" font-family="Liberation Sans, sans-serif" font-size="12.3" fill="#747474">0</text>
<text x="1458.5" y="656.0" font-family="Liberation Sans, sans-serif" font-size="12.3" fill="#747474">10</text>
<text x="1458.5" y="630.2" font-family="Liberation Sans, sans-serif" font-size="12.3" fill="#747474">20</text>
<text x="1458.5" y="604.4" font-family="Liberation Sans, sans-serif" font-size="12.3" fill="#747474">30</text>
<text x="1458.5" y="578.6" font-family="Liberation Sans, sans-serif" font-size="12.3" fill="#747474">40</text>
<text x="1458.5" y="552.8" font-family="Liberation Sans, sans-serif" font-size="12.3" fill="#747474">50</text>
<text x="1458.5" y="527.0" font-family="Liberation Sans, sans-serif" font-size="12.3" fill="#747474">60</text>
<text x="1458.5" y="501.2" font-family="Liberation Sans, sans-serif" font-size="12.3" fill="#747474">70</text>
<text x="1458.5" y="475.4" font-family="Liberation Sans, sans-serif" font-size="12.3" fill="#747474">80</text>
<text x="1458.5" y="449.6" font-family="Liberation Sans, sans-serif" font-size="12.3" fill="#747474">90</text>
<text x="1458.5" y="423.8" font-family="Liberation Sans, sans-serif" font-size="12.3" fill="#747474">100</text>
<text transform="translate(452.4,688.6) rotate(-50)" text-anchor="end" x="0" y="4" font-family="Liberation Sans, sans-serif" font-size="12.3" fill="#747474">13:42</text>
<text transform="translate(507.6,688.6) rotate(-50)" text-anchor="end" x="0" y="4" font-family="Liberation Sans, sans-serif" font-size="12.3" fill="#747474">13:45</text>
<text transform="translate(562.9,688.6) rotate(-50)" text-anchor="end" x="0" y="4" font-family="Liberation Sans, sans-serif" font-size="12.3" fill="#747474">13:48</text>
<text transform="translate(618.1,688.6) rotate(-50)" text-anchor="end" x="0" y="4" font-family="Liberation Sans, sans-serif" font-size="12.3" fill="#747474">13:52</text>
<text transform="translate(673.4,688.6) rotate(-50)" text-anchor="end" x="0" y="4" font-family="Liberation Sans, sans-serif" font-size="12.3" fill="#747474">13:55</text>
<text transform="translate(728.6,688.6) rotate(-50)" text-anchor="end" x="0" y="4" font-family="Liberation Sans, sans-serif" font-size="12.3" fill="#747474">13:58</text>
<text transform="translate(783.9,688.6) rotate(-50)" text-anchor="end" x="0" y="4" font-family="Liberation Sans, sans-serif" font-size="12.3" fill="#747474">14:02</text>
<text transform="translate(839.1,688.6) rotate(-50)" text-anchor="end" x="0" y="4" font-family="Liberation Sans, sans-serif" font-size="12.3" fill="#747474">14:05</text>
<text transform="translate(894.4,688.6) rotate(-50)" text-anchor="end" x="0" y="4" font-family="Liberation Sans, sans-serif" font-size="12.3" fill="#747474">14:08</text>
<text transform="translate(949.6,688.6) rotate(-50)" text-anchor="end" x="0" y="4" font-family="Liberation Sans, sans-serif" font-size="12.3" fill="#747474">14:12</text>
<text transform="translate(1004.9,688.6) rotate(-50)" text-anchor="end" x="0" y="4" font-family="Liberation Sans, sans-serif" font-size="12.3" fill="#747474">14:15</text>
<text transform="translate(1060.2,688.6) rotate(-50)" text-anchor="end" x="0" y="4" font-family="Liberation Sans, sans-serif" font-size="12.3" fill="#747474">14:18</text>
<text transform="translate(1115.4,688.6) rotate(-50)" text-anchor="end" x="0" y="4" font-family="Liberation Sans, sans-serif" font-size="12.3" fill="#747474">14:22</text>
<text transform="translate(1170.7,688.6) rotate(-50)" text-anchor="end" x="0" y="4" font-family="Liberation Sans, sans-serif" font-size="12.3" fill="#747474">14:25</text>
<text transform="translate(1225.9,688.6) rotate(-50)" text-anchor="end" x="0" y="4" font-family="Liberation Sans, sans-serif" font-size="12.3" fill="#747474">14:28</text>
<text transform="translate(1281.2,688.6) rotate(-50)" text-anchor="end" x="0" y="4" font-family="Liberation Sans, sans-serif" font-size="12.3" fill="#747474">14:32</text>
<text transform="translate(1336.4,688.6) rotate(-50)" text-anchor="end" x="0" y="4" font-family="Liberation Sans, sans-serif" font-size="12.3" fill="#747474">14:35</text>
<text transform="translate(1391.7,688.6) rotate(-50)" text-anchor="end" x="0" y="4" font-family="Liberation Sans, sans-serif" font-size="12.3" fill="#747474">14:39</text>
<text transform="translate(1446.9,688.6) rotate(-50)" text-anchor="end" x="0" y="4" font-family="Liberation Sans, sans-serif" font-size="12.3" fill="#747474">14:42</text>
<text transform="translate(411.5,549.5) rotate(-90)" text-anchor="middle" font-family="Liberation Sans, sans-serif" font-size="11.9" fill="#747474">Leistung [kW]</text>
<text transform="translate(1492.3,550) rotate(90)" text-anchor="middle" font-family="Liberation Sans, sans-serif" font-size="11.9" fill="#747474">SoC [%]</text>
</svg>

<!-- fitted text -->
<span class="t" style="left:6.24px;top:3.84px;font-size:12px;font-weight:normal;color:#000;transform:scaleX(0.9783);">Datei</span>
<span class="t" style="left:45.24px;top:3.84px;font-size:12px;font-weight:normal;color:#000;transform:scaleX(0.9719);">Bearbeiten</span>
<span class="t" style="left:113.24px;top:3.84px;font-size:12px;font-weight:normal;color:#000;transform:scaleX(1.0047);">Ansicht</span>
<span class="t" style="left:165.24px;top:3.84px;font-size:12px;font-weight:normal;color:#000;transform:scaleX(1.0045);">Chronik</span>
<span class="t" style="left:219.24px;top:3.84px;font-size:12px;font-weight:normal;color:#000;transform:scaleX(0.9410);">Lesezeichen</span>
<span class="t" style="left:294.24px;top:3.84px;font-size:12px;font-weight:normal;color:#000;transform:scaleX(0.8940);">Extras</span>
<span class="t" style="left:336.24px;top:3.84px;font-size:12px;font-weight:normal;color:#000;transform:scaleX(1.0579);">Hilfe</span>
<span class="t" style="left:32.74px;top:44.84px;font-size:12px;font-weight:normal;color:#000;transform:scaleX(0.9648);">openWB</span>
<span class="t" style="left:329.20px;top:86.04px;font-size:14.6px;font-weight:normal;color:#15141a;transform:scaleX(0.9556);">192.168.7.73<span style="color:#7c7c84">/openWB/web/index.php</span></span>
<span class="t" style="left:16.30px;top:133.07px;font-size:20px;font-weight:normal;color:#fff;transform:scaleX(0.9764);">openWB</span>
<span class="t" style="left:115.12px;top:134.96px;font-size:16px;font-weight:normal;color:#999c9f;transform:scaleX(1.0317);">Logging</span>
<span class="t" style="left:205.12px;top:134.96px;font-size:16px;font-weight:normal;color:#999c9f;transform:scaleX(0.9767);">Status</span>
<span class="t" style="left:264.12px;top:134.96px;font-size:16px;font-weight:normal;color:#999c9f;transform:scaleX(1.0545);">Hilfe</span>
<span class="t" style="left:312.62px;top:134.96px;font-size:16px;font-weight:normal;color:#999c9f;transform:scaleX(0.9967);">Einstellungen</span>
<span class="t" style="left:395.74px;top:179.33px;font-size:23px;font-weight:normal;color:#000;transform:scaleX(0.9177);">Fr, 16.09.2022</span>
<span class="t" style="left:1453.73px;top:179.33px;font-size:23px;font-weight:normal;color:#000;transform:scaleX(0.9056);">14:42</span>
<span class="t" style="left:877.29px;top:186.20px;font-size:29.3px;font-weight:normal;color:#fff;transform:scaleX(0.9963);">Sofortladen</span>
<span class="t" style="left:510.16px;top:242.35px;font-size:24.4px;font-weight:bold;color:#000;transform:scaleX(1.0729);-webkit-text-stroke:0.35px currentColor;">PV: 28,94 kW</span>
<span class="t" style="left:682.25px;top:245.22px;font-size:21px;font-weight:bold;color:#000;transform:scaleX(1.0865);-webkit-text-stroke:0.35px currentColor;">(122,50 kWh)</span>
<span class="t" style="left:988.66px;top:242.35px;font-size:24.4px;font-weight:bold;color:#000;transform:scaleX(1.1039);-webkit-text-stroke:0.35px currentColor;">Netz Imp: 37 W</span>
<span class="t" style="left:1189.25px;top:245.22px;font-size:21px;font-weight:bold;color:#000;transform:scaleX(1.0944);-webkit-text-stroke:0.35px currentColor;">(44,54 kWh I)</span>
<span class="t" style="left:1337.75px;top:245.22px;font-size:21px;font-weight:bold;color:#000;transform:scaleX(1.0620);-webkit-text-stroke:0.35px currentColor;">(20,23 kWh E)</span>
<span class="t" style="left:439.66px;top:285.35px;font-size:24.4px;font-weight:bold;color:#000;transform:scaleX(1.0626);-webkit-text-stroke:0.35px currentColor;">Hausverbrauch: 18,82 kW</span>
<span class="t" style="left:764.75px;top:288.22px;font-size:21px;font-weight:bold;color:#000;transform:scaleX(1.0925);-webkit-text-stroke:0.35px currentColor;">(99,97 kWh)</span>
<span class="t" style="left:1038.16px;top:285.35px;font-size:24.4px;font-weight:bold;color:#000;transform:scaleX(1.0598);-webkit-text-stroke:0.35px currentColor;">Ladeleistung: 1,80 kW</span>
<span class="t" style="left:1319.75px;top:288.22px;font-size:21px;font-weight:bold;color:#000;transform:scaleX(1.0806);-webkit-text-stroke:0.35px currentColor;">(8,40 kWh)</span>
<span class="t" style="left:531.56px;top:328.85px;font-size:24.4px;font-weight:bold;color:#000;transform:scaleX(1.0529);-webkit-text-stroke:0.35px currentColor;">Speicher-Ladung: 8,36 kW</span>
<span class="t" style="left:861.85px;top:331.72px;font-size:21px;font-weight:bold;color:#000;transform:scaleX(1.0977);-webkit-text-stroke:0.35px currentColor;">(41,90 kWh I)</span>
<span class="t" style="left:1009.85px;top:331.72px;font-size:21px;font-weight:bold;color:#000;transform:scaleX(1.0644);-webkit-text-stroke:0.35px currentColor;">(3,46 kWh E)</span>
<span class="t" style="left:1152.66px;top:328.85px;font-size:24.4px;font-weight:bold;color:#000;transform:scaleX(1.0458);-webkit-text-stroke:0.35px currentColor;">- Ladestand: 98 %</span>
<span class="t" style="left:457.68px;top:734.38px;font-size:24px;font-weight:bold;color:#505357;transform:scaleX(1.0782);-webkit-text-stroke:0.35px currentColor;">Ladepunkt</span>
<span class="t" style="left:715.18px;top:734.38px;font-size:24px;font-weight:bold;color:#505357;transform:scaleX(1.0829);-webkit-text-stroke:0.35px currentColor;">Ladeparameter</span>
<span class="t" style="left:1091.18px;top:734.38px;font-size:24px;font-weight:bold;color:#505357;transform:scaleX(1.0941);-webkit-text-stroke:0.35px currentColor;">geladen</span>
<span class="t" style="left:1402.58px;top:734.38px;font-size:24px;font-weight:bold;color:#505357;transform:scaleX(0.9672);-webkit-text-stroke:0.35px currentColor;">SoC</span>
<span class="t" style="left:502.68px;top:774.58px;font-size:24px;font-weight:bold;color:#9b0a0a;transform:scaleX(0.9574);-webkit-text-stroke:0.35px currentColor;">LP1</span>
<span class="t" style="left:753.18px;top:774.58px;font-size:24px;font-weight:normal;color:#4f5256;transform:scaleX(1.1228);">0 W / 0 A</span>
<span class="t" style="left:1035.68px;top:774.58px;font-size:24px;font-weight:normal;color:#4f5256;transform:scaleX(1.0917);">6,1 kWh / 30,0 km</span>
<span class="t" style="left:1416.68px;top:774.58px;font-size:24px;font-weight:normal;color:#4f5256;transform:scaleX(1.2039);">--</span>
<span class="t" style="left:490.18px;top:813.58px;font-size:24px;font-weight:bold;color:#0b6a1d;transform:scaleX(0.9726);-webkit-text-stroke:0.35px currentColor;">LP2</span>
<span class="t" style="left:716.78px;top:813.58px;font-size:24px;font-weight:normal;color:#4f5256;transform:scaleX(1.0533);">1,80 kW</span>
<span class="t" style="left:847.68px;top:813.58px;font-size:24px;font-weight:normal;color:#4f5256;transform:scaleX(1.0892);">32 A</span>
<span class="t" style="left:1035.68px;top:813.58px;font-size:24px;font-weight:normal;color:#4f5256;transform:scaleX(1.0917);">3,5 kWh / 17,6 km</span>
<span class="t" style="left:1416.68px;top:813.58px;font-size:24px;font-weight:normal;color:#4f5256;transform:scaleX(1.2039);">--</span>
<span class="t" style="left:772.36px;top:884.30px;font-size:28px;font-weight:bold;color:#999896;transform:scaleX(1.0995);-webkit-text-stroke:0.35px currentColor;">Sofortladen Stromst&auml;rke</span>
<span class="t" style="left:614.90px;top:938.45px;font-size:29px;font-weight:normal;color:#000;transform:scaleX(0.8999);">LP1:</span>
<span class="t" style="left:1236.81px;top:938.45px;font-size:29px;font-weight:normal;color:#000;transform:scaleX(0.9814);">32 A</span>
<span class="t" style="left:614.90px;top:999.45px;font-size:29px;font-weight:normal;color:#000;transform:scaleX(0.8999);">LP2:</span>
<span class="t" style="left:1236.81px;top:999.45px;font-size:29px;font-weight:normal;color:#000;transform:scaleX(0.9814);">32 A</span>

</body>
</html>
